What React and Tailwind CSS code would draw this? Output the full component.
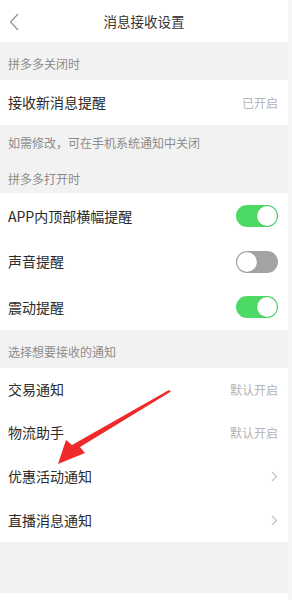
import React from 'react'

const font = { fontFamily: '"Noto Sans CJK SC", "Noto Sans", sans-serif' }

function Toggle({ on }) {
  return (
    <span
      className={`relative flex h-[22px] w-[42px] items-center rounded-full ${
        on ? 'bg-[#4cd964]' : 'bg-[#a3a3a3]'
      }`}
    >
      <span
        className={`absolute top-[1px] h-[20px] w-[20px] rounded-full bg-white shadow-[0_0_1px_rgba(0,0,0,0.3)] ${
          on ? 'right-[1px]' : 'left-[1px]'
        }`}
      />
    </span>
  )
}

function Chevron() {
  return (
    <svg width="7" height="11" viewBox="0 0 7 11" fill="none" stroke="#c2c2c2" strokeWidth="1.2">
      <path d="M1 1l4.5 4.5L1 10" />
    </svg>
  )
}

function Row({ label, right, h = 'h-[45px]' }) {
  return (
    <div className={`flex ${h} items-center justify-between pl-[8px] pr-[10px]`}>
      <span className="text-[14px] text-[#2b2b2b]">{label}</span>
      {right}
    </div>
  )
}

function Label({ children, h = 'h-[38px]' }) {
  return (
    <div className={`flex ${h} items-center pl-[8px] pt-[5px] text-[12px] text-[#8c8c8c]`}>{children}</div>
  )
}

const Muted = ({ children }) => <span className="text-[12px] text-[#b3b3b3]">{children}</span>

export default function App() {
  return (
    <div className="relative flex h-[600px] w-[292px] overflow-hidden bg-[#f6f6f6]" style={font}>
      <div className="flex w-[288px] flex-col bg-[#f2f2f2]">
        {/* header */}
        <div className="relative flex h-[42px] items-center justify-center bg-white">
          <svg className="absolute left-[9px] top-[13px]" width="10" height="18" viewBox="0 0 10 18" fill="none" stroke="#8a8a8a" strokeWidth="1.1">
            <path d="M9 1L1.5 9L9 17" />
          </svg>
          <span className="text-[13.5px] text-[#333]">消息接收设置</span>
        </div>

        <Label>拼多多关闭时</Label>
        <div className="bg-white">
          <Row label="接收新消息提醒" right={<Muted>已开启</Muted>} />
        </div>

        <div className="flex h-[34px] items-center pl-[8px] pt-[2px] text-[12px] text-[#8c8c8c]">
          如需修改，可在手机系统通知中关闭
        </div>
        <div className="flex h-[34px] items-center pl-[8px] pt-[6px] text-[12px] text-[#8c8c8c]">拼多多打开时</div>

        <div className="bg-white">
          <Row label="APP内顶部横幅提醒" right={<Toggle on />} h="h-[46px]" />
          <Row label="声音提醒" right={<Toggle on={false} />} h="h-[45px]" />
          <Row label="震动提醒" right={<Toggle on />} h="h-[46px]" />
        </div>

        <Label>选择想要接收的通知</Label>

        <div className="bg-white">
          <Row label="交易通知" right={<Muted>默认开启</Muted>} h="h-[43px]" />
          <Row label="物流助手" right={<Muted>默认开启</Muted>} h="h-[43px]" />
          <Row label="优惠活动通知" right={<Chevron />} h="h-[44px]" />
          <Row label="直播消息通知" right={<Chevron />} h="h-[44px]" />
        </div>

        <div className="flex-1" />
        <div className="h-[7px] bg-white" />
      </div>

      {/* red annotation arrow */}
      <svg className="absolute left-0 top-0 pointer-events-none" width="292" height="600" viewBox="0 0 292 600">
        <path d="M171 391.5 L80 447 L85 453 L58 464 L66 440 L72 445 L169 390 Z" fill="#ee2a2a" />
      </svg>
    </div>
  )
}
